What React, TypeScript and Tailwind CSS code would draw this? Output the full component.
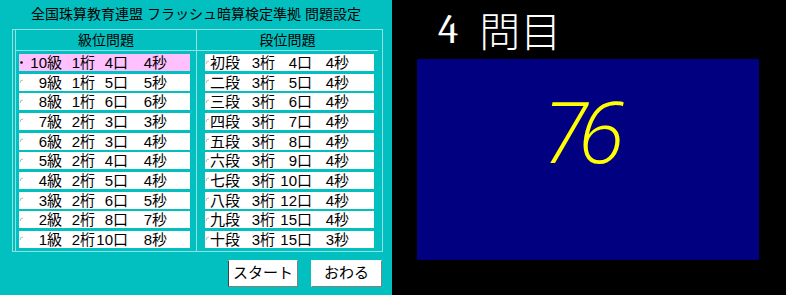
import React from "react";

const FONT = "font-['Liberation_Sans','Noto_Sans_CJK_JP',sans-serif]";

const KYU = [
  ["10級", "1桁", "4口", "4秒"],
  ["9級", "1桁", "5口", "5秒"],
  ["8級", "1桁", "6口", "6秒"],
  ["7級", "2桁", "3口", "3秒"],
  ["6級", "2桁", "3口", "4秒"],
  ["5級", "2桁", "4口", "4秒"],
  ["4級", "2桁", "5口", "4秒"],
  ["3級", "2桁", "6口", "5秒"],
  ["2級", "2桁", "8口", "7秒"],
  ["1級", "2桁", "10口", "8秒"],
];

const DAN = [
  ["初段", "3桁", "4口", "4秒"],
  ["二段", "3桁", "5口", "4秒"],
  ["三段", "3桁", "6口", "4秒"],
  ["四段", "3桁", "7口", "4秒"],
  ["五段", "3桁", "8口", "4秒"],
  ["六段", "3桁", "9口", "4秒"],
  ["七段", "3桁", "10口", "4秒"],
  ["八段", "3桁", "12口", "4秒"],
  ["九段", "3桁", "15口", "4秒"],
  ["十段", "3桁", "15口", "3秒"],
];

const KYU_W = ["w-[38px]", "w-[33px]", "w-[33px]", "w-[39px]"];
const DAN_W = ["w-[28px]", "w-[37px]", "w-[37px]", "w-[37px]"];

function Mark({ on }: { on: boolean }) {
  return (
    <svg width="5" height="5" viewBox="0 0 5 5" className="shrink-0 -mt-[1px]">
      {on ? (
        <circle cx="2.5" cy="2.5" r="1.3" fill="#000" />
      ) : (
        <path d="M1 4 A3 3 0 0 1 4 1" stroke="#b8b8b8" strokeWidth="1" fill="none" />
      )}
    </svg>
  );
}

function Row({ cells, widths, selected }: { cells: string[]; widths: string[]; selected?: boolean }) {
  return (
    <div
      className={
        "flex h-[17px] items-center text-[15px] leading-[17px] text-black " +
        (selected ? "bg-[#ffc0ff]" : "bg-white")
      }
    >
      <Mark on={!!selected} />
      {cells.map((c, i) => (
        <span key={i} className={widths[i] + " whitespace-nowrap text-right"}>
          {c}
        </span>
      ))}
    </div>
  );
}

function Column({
  title,
  rows,
  widths,
  className,
  headerClass,
  listClass,
}: {
  title: string;
  rows: string[][];
  widths: string[];
  className: string;
  headerClass: string;
  listClass: string;
}) {
  return (
    <div className={className}>
      <div className={"flex h-[21px] items-center justify-center border-b border-[#8fe2e2] text-[14px] text-black " + headerClass}>
        {title}
      </div>
      <div className={"flex flex-col gap-[2.67px] pt-[3px] " + listClass}>
        {rows.map((r, i) => (
          <Row key={i} cells={r} widths={widths} selected={i === 0 && widths === KYU_W} />
        ))}
      </div>
    </div>
  );
}

export default function App() {
  return (
    <div className={"flex h-[295px] w-[786px] overflow-hidden " + FONT}>
      {/* 設定パネル */}
      <div className="flex w-[392px] shrink-0 flex-col bg-[#03c0c0]">
        <div className="flex h-[29px] items-center justify-center text-[14px] text-black">
          全国珠算教育連盟 フラッシュ暗算検定準拠 問題設定
        </div>
        <div className="ml-[12px] flex h-[223px] w-[371px] border border-[#8fe2e2]">
          <Column
            title="級位問題"
            rows={KYU}
            widths={KYU_W}
            className="ml-[2px] w-[182px] border-x border-[#8fe2e2]"
            headerClass=""
            listClass="pl-[3px] pr-[6px]"
          />
          <Column
            title="段位問題"
            rows={DAN}
            widths={DAN_W}
            className="flex-1"
            headerClass="mr-[4px]"
            listClass="pl-[8px] pr-[8px]"
          />
        </div>
        <div className="mt-[8px] flex justify-end gap-[13px] pr-[10px]">
          <button className="h-[27px] w-[70px] border border-b-[#808080] border-l-[#404040] border-r-[#808080] border-t-white bg-white text-[15px] text-black">
            スタート
          </button>
          <button className="h-[27px] w-[71px] border border-b-[#808080] border-l-white border-r-[#808080] border-t-white bg-white text-[15px] text-black">
            おわる
          </button>
        </div>
      </div>

      {/* 出題パネル */}
      <div className="flex flex-1 flex-col bg-black">
        <div className="flex h-[59px] items-center pl-[46px] text-[41px] leading-none text-white">
          <span className="font-serif">4</span>
          <span className="ml-[21px] font-['Noto_Sans_CJK_JP',sans-serif] font-light">問目</span>
        </div>
        <div className="ml-[25px] flex h-[201px] w-[342px] justify-center bg-[#000080] pr-[20px] pt-[30px]">
          <span className="font-['Open_Sans',sans-serif] text-[84px] font-light italic leading-none tracking-[-10px] text-[#ffff00]">
            76
          </span>
        </div>
      </div>
    </div>
  );
}
